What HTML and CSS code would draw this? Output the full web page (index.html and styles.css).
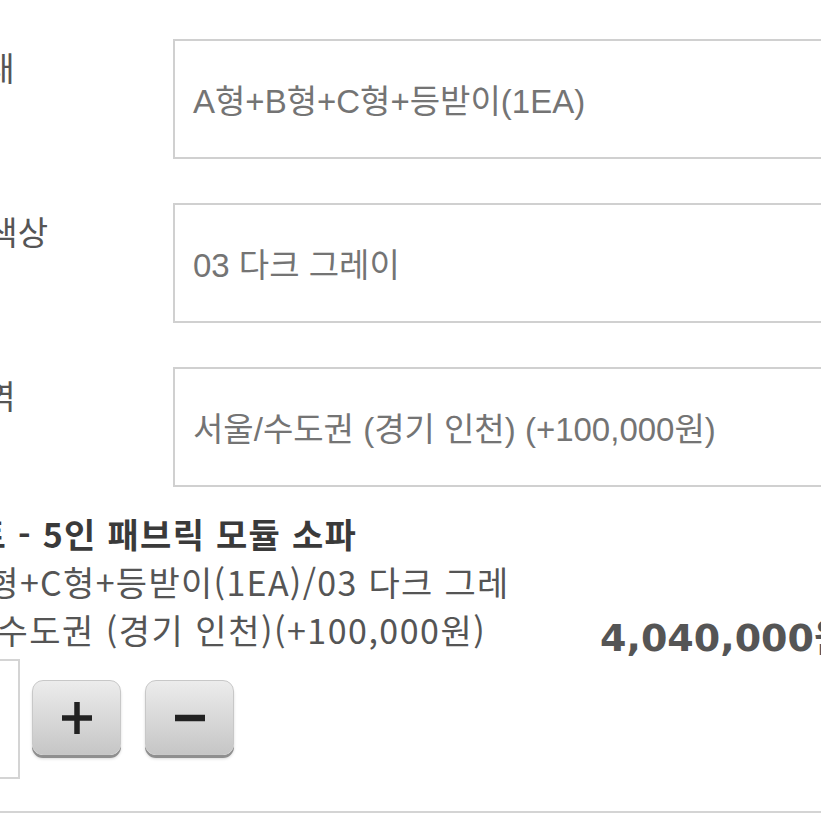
FILE: index.html
```html
<!DOCTYPE html>
<html lang="ko">
<head>
<meta charset="utf-8">
<title>옵션 선택</title>
<link rel="stylesheet" href="styles.css">
</head>
<body>
<div class="page">
  <div class="form">
    <div class="field">
      <div class="label label-shape">소파 형태</div>
      <div class="box">A형+B형+C형+등받이(1EA)</div>
    </div>
    <div class="field">
      <div class="label label-color">패브릭 색상</div>
      <div class="box">03 다크 그레이</div>
    </div>
    <div class="field">
      <div class="label label-area">배송 지역</div>
      <div class="box">서울/수도권 (경기 인천) (+100,000원)</div>
    </div>
  </div>

  <div class="summary">
    <div class="line line-title">세트 - 5인 패브릭 모듈 소파</div>
    <div class="line line-opt">A형+B형+C형+등받이(1EA)/03 다크 그레</div>
    <div class="line-row">
      <div class="line line-area">서울/수도권 (경기 인천)(+100,000원)</div>
      <div class="price">4,040,000원</div>
    </div>
  </div>

  <div class="qty-row">
    <div class="qty-input"></div>
    <button class="btn" type="button" aria-label="수량 증가">
      <svg width="34" height="36" viewBox="0 0 34 36"><path d="M17 2 V34 M2 18 H32" stroke="#222" stroke-width="5.5" fill="none"/></svg>
    </button>
    <button class="btn" type="button" aria-label="수량 감소">
      <svg width="34" height="36" viewBox="0 0 34 36"><path d="M2 18 H32" stroke="#222" stroke-width="6.5" fill="none"/></svg>
    </button>
  </div>

  <div class="divider"></div>
</div>
</body>
</html>
```

FILE: styles.css
```css
html, body {
  margin: 0;
  padding: 0;
  background: #ffffff;
  overflow: hidden;
}

.page {
  width: 821px;
  height: 821px;
  overflow: hidden;
  display: flex;
  flex-direction: column;
  font-family: "Liberation Sans", "Noto Sans CJK KR", sans-serif;
}

.form {
  padding-top: 39px;
  display: flex;
  flex-direction: column;
  gap: 44px;
}

.field {
  display: grid;
  grid-template-columns: 173px 720px;
  align-items: start;
}

.label {
  font-family: "Noto Sans CJK KR", sans-serif;
  font-size: 33px;
  line-height: 45px;
  color: #555555;
  padding-top: 6px;
  white-space: nowrap;
}

.label-shape { margin-left: -116px; }
.label-color { margin-left: -113px; }
.label-area { margin-left: -115px; }

.box {
  box-sizing: border-box;
  height: 120px;
  border: 2px solid #d0d0d0;
  display: flex;
  align-items: center;
  padding-left: 18px;
  font-size: 33px;
  color: #747474;
  white-space: nowrap;
}

.summary {
  margin-top: 23px;
  font-family: "Noto Sans CJK KR", sans-serif;
  font-size: 34px;
  letter-spacing: 1.3px;
  color: #555555;
}

.line {
  line-height: 48px;
  white-space: nowrap;
}

.line-title {
  margin-left: -58px;
  color: #3a3a3a;
  font-weight: bold;
}

.line-opt { margin-left: -111px; }

.line-row {
  display: grid;
  grid-template-columns: 600px 300px;
  align-items: start;
}

.line-area { margin-left: -84px; letter-spacing: 1.5px; }

.price {
  margin-top: 13px;
  font-family: "DejaVu Sans", "Noto Sans CJK KR", sans-serif;
  font-weight: bold;
  font-size: 38px;
  line-height: 38px;
  letter-spacing: 0;
  color: #555555;
  white-space: nowrap;
}

.qty-row {
  margin-top: 2px;
  display: flex;
  align-items: center;
}

.qty-input {
  box-sizing: border-box;
  width: 100px;
  height: 120px;
  margin-left: -80px;
  border: 2px solid #d4d4d4;
  background: #fff;
}

.btn {
  box-sizing: border-box;
  width: 89px;
  height: 75px;
  margin-left: 12px;
  margin-bottom: 3px;
  padding: 0;
  border: 1px solid #c8c8c8;
  border-radius: 11px;
  background: linear-gradient(#ececec, #c6c6c6);
  box-shadow: 0 3px 0 #8f8f8f, 0 4px 3px rgba(0, 0, 0, 0.15);
  display: flex;
  align-items: center;
  justify-content: center;
}

.btn + .btn {
  margin-left: 24px;
}

.divider {
  margin-top: 32px;
  height: 2px;
  background: #d4d4d4;
}
```
